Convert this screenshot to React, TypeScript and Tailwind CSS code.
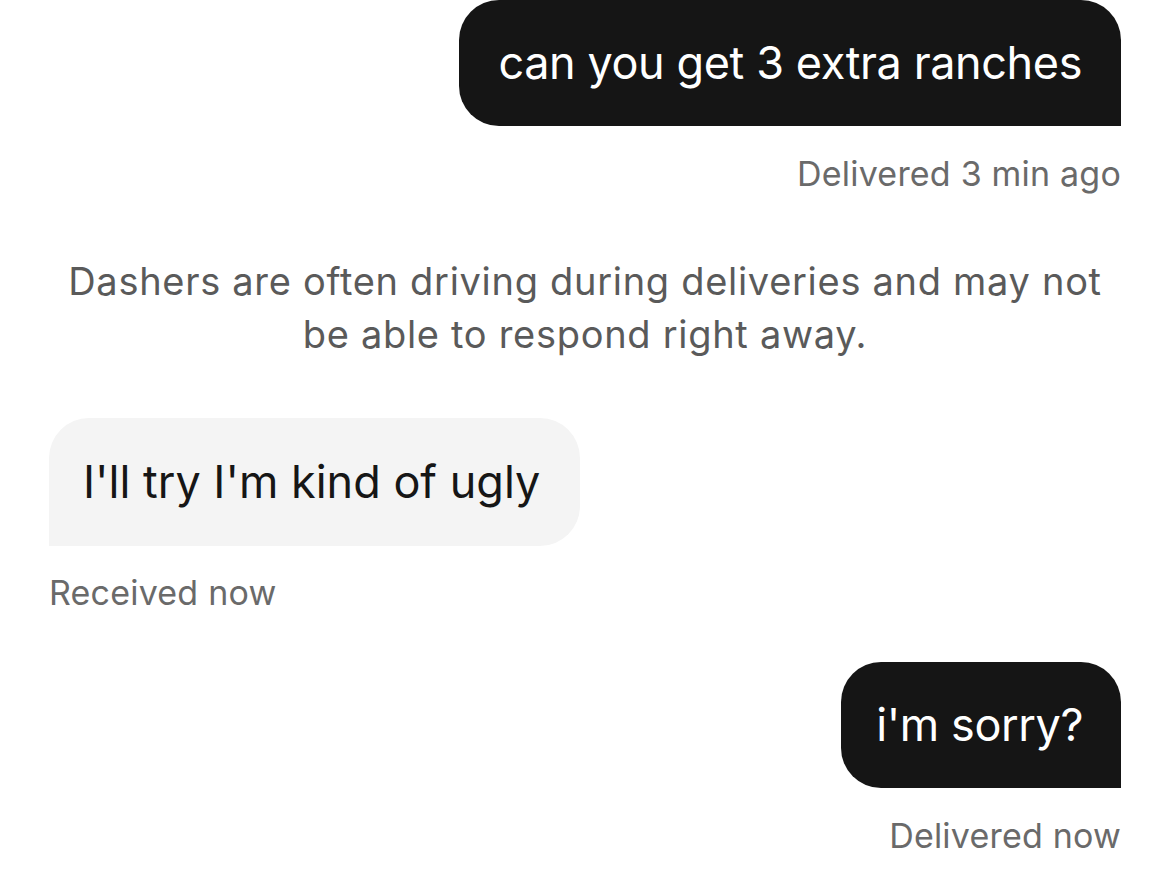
const font = { fontFamily: 'Inter, Lato, sans-serif' };

function Sent({ text, meta, pad }: { text: string; meta: string; pad: string }) {
  return (
    <div className="flex flex-col items-end">
      <div className={`rounded-[40px] rounded-br-none bg-[#151515] py-[36px] text-[45px] leading-[54px] tracking-[-0.4px] text-white ${pad}`}>
        {text}
      </div>
      <div className="mt-[28px] text-[34px] leading-[40px] tracking-[0.2px] text-[#6a6a6a]">{meta}</div>
    </div>
  );
}

function Received({ text, meta }: { text: string; meta: string }) {
  return (
    <div className="flex flex-col items-start">
      <div className="rounded-[40px] rounded-bl-none bg-[#f4f4f4] py-[37px] pl-[34px] pr-[40px] text-[45px] leading-[54px] text-[#161616]">
        {text}
      </div>
      <div className="mt-[27px] text-[34px] leading-[40px] tracking-[0.2px] text-[#6a6a6a]">{meta}</div>
    </div>
  );
}

export default function App() {
  return (
    <div className="h-[879px] w-[1170px] overflow-hidden bg-white px-[49px]" style={font}>
      <Sent text="can you get 3 extra ranches" meta="Delivered 3 min ago" pad="px-[39px]" />
      <p className="mt-[61px] text-center text-[38px] leading-[53px] tracking-[0.7px] text-[#5a5a5a]">
        Dashers are often driving during deliveries and may not
        <br />
        be able to respond right away.
      </p>
      <div className="mt-[57px]">
        <Received text="I'll try I'm kind of ugly" meta="Received now" />
      </div>
      <div className="mt-[49px]">
        <Sent text="i'm sorry?" meta="Delivered now" pad="pl-[35px] pr-[38px]" />
      </div>
    </div>
  );
}
